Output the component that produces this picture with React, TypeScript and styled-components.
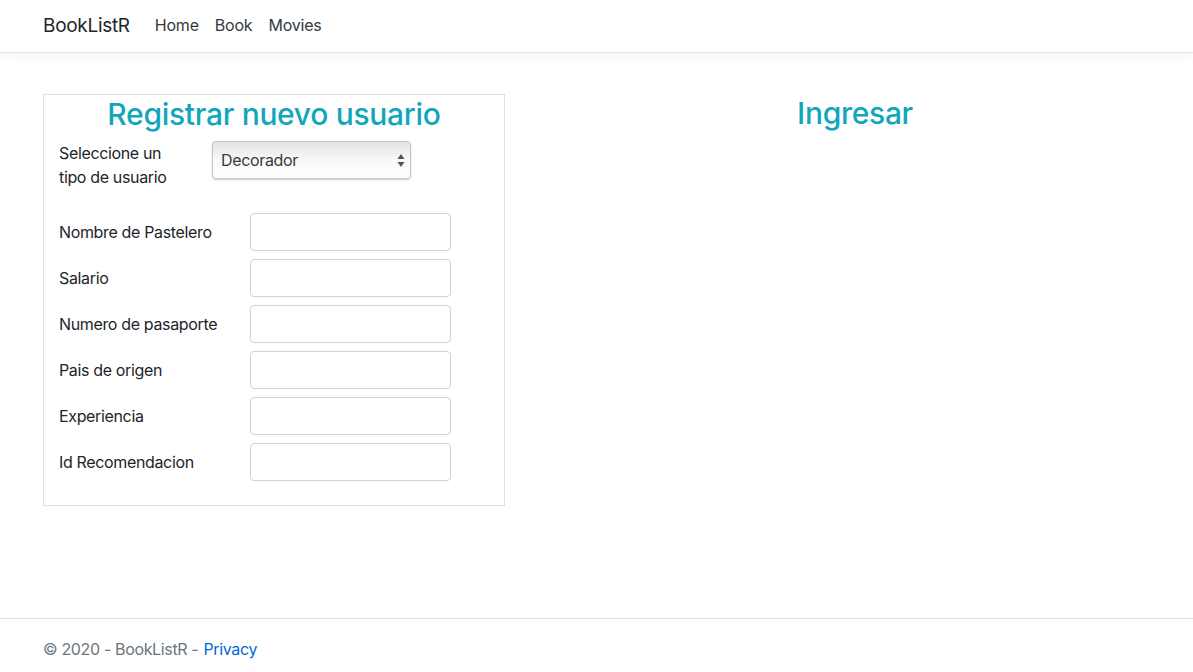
import React from 'react'
import styled, { createGlobalStyle } from 'styled-components'

const GlobalStyle = createGlobalStyle`
  html, body {
    margin: 0;
    padding: 0;
    background: #fff;
  }
  body {
    font-family: Inter, "Noto Sans", sans-serif;
    font-size: 16px;
    letter-spacing: -0.35px;
    color: #212529;
  }
  * {
    box-sizing: border-box;
  }
`

const Page = styled.div`
  display: flex;
  flex-direction: column;
  min-height: 672px;
`

const Navbar = styled.nav`
  display: flex;
  align-items: center;
  height: 53px;
  padding: 0 43px 2px;
  border-bottom: 1px solid #e2e2e2;
  box-shadow: 0 4px 12px rgba(0, 0, 0, 0.04);
`

const Brand = styled.a`
  font-size: 19px;
  color: #212529;
  margin-right: 25px;
  letter-spacing: -0.3px;
`

const NavLink = styled.a`
  font-size: 16px;
  color: #343a40;
  margin-right: 16px;
  letter-spacing: -0.2px;
`

const Main = styled.main`
  flex: 1;
  display: grid;
  grid-template-columns: 462px 500px;
  column-gap: 100px;
  align-items: start;
  padding: 41px 43px 0;
`

const Panel = styled.section`
  border: 1px solid #dee2e6;
  padding: 0 15px 16px;
`

const Heading = styled.h2`
  margin: 0 0 8px;
  font-size: 30px;
  font-weight: 500;
  line-height: 38px;
  color: #12a6bc;
  text-align: center;
  letter-spacing: -0.3px;
`

const SelectRow = styled.div`
  display: flex;
  align-items: flex-start;
  margin-bottom: 24px;
`

const SelectLabel = styled.label`
  width: 153px;
  padding-right: 40px;
  line-height: 24px;
`

const Select = styled.div`
  position: relative;
  width: 199px;
  height: 38px;
  border: 1px solid #c6c6c6;
  border-radius: 4px;
  background: linear-gradient(#e4e4e4, #f8f8f8 50%, #fff);
  box-shadow: 0 1px 2px rgba(0, 0, 0, 0.2);
  display: flex;
  align-items: center;
  padding: 0 8px;
  color: #3a3a3a;
  font-size: 16px;
`

const Arrows = styled.svg`
  position: absolute;
  right: 5px;
  top: 12px;
`

const FieldRow = styled.div`
  display: flex;
  align-items: center;
  height: 38px;
  margin-bottom: 8px;
`

const FieldLabel = styled.label`
  width: 191px;
`

const Input = styled.input`
  width: 201px;
  height: 38px;
  border: 1px solid #ced4da;
  border-radius: 4px;
  background: #fff;
  font: inherit;
  padding: 6px 12px;
`

const RightColumn = styled.section`
  text-align: center;
`

const Footer = styled.footer`
  border-top: 1px solid #dee2e6;
  height: 54px;
  display: flex;
  align-items: center;
  padding: 6px 43px 0;
  color: #6c757d;
  font-size: 16px;
`

const FooterLink = styled.a`
  color: #0366d6;
  margin-left: 5px;
`

const fields = [
  'Nombre de Pastelero',
  'Salario',
  'Numero de pasaporte',
  'Pais de origen',
  'Experiencia',
  'Id Recomendacion',
]

export default function App() {
  return (
    <Page>
      <GlobalStyle />
      <Navbar>
        <Brand>BookListR</Brand>
        <NavLink>Home</NavLink>
        <NavLink>Book</NavLink>
        <NavLink>Movies</NavLink>
      </Navbar>
      <Main>
        <Panel>
          <Heading>Registrar nuevo usuario</Heading>
          <SelectRow>
            <SelectLabel>Seleccione un tipo de usuario</SelectLabel>
            <Select>
              Decorador
              <Arrows width="8" height="13" viewBox="0 0 8 13">
                <path d="M4 0 L7.5 5 L0.5 5 Z" fill="#555" />
                <path d="M4 13 L7.5 8 L0.5 8 Z" fill="#555" />
              </Arrows>
            </Select>
          </SelectRow>
          {fields.map(f => (
            <FieldRow key={f}>
              <FieldLabel>{f}</FieldLabel>
              <Input type="text" />
            </FieldRow>
          ))}
        </Panel>
        <RightColumn>
          <Heading>Ingresar</Heading>
        </RightColumn>
      </Main>
      <Footer>
        © 2020 - BookListR -<FooterLink>Privacy</FooterLink>
      </Footer>
    </Page>
  )
}
